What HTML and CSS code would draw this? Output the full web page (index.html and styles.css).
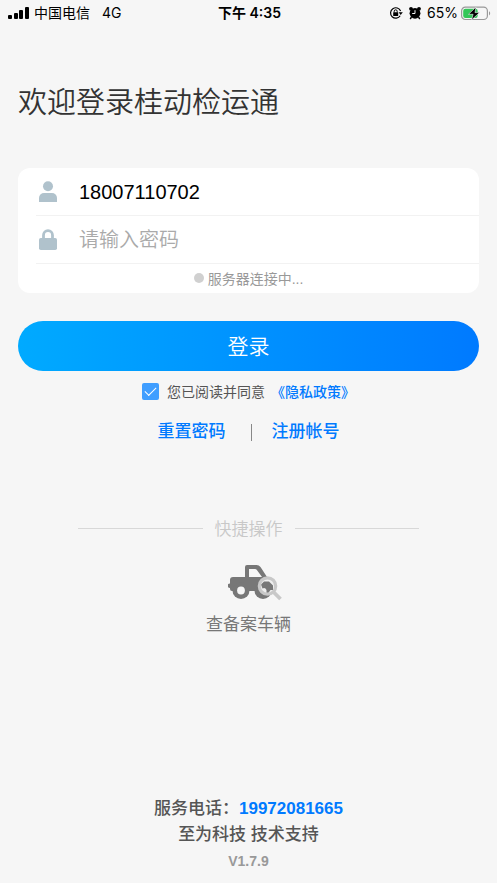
FILE: index.html
```html
<!DOCTYPE html>
<html lang="zh-CN">
<head>
<meta charset="utf-8">
<meta name="viewport" content="width=device-width, initial-scale=1">
<title>登录</title>
<link rel="stylesheet" href="styles.css">
</head>
<body>
<header class="status">
  <div class="status-left">
    <svg class="signal" width="22" height="14" viewBox="0 0 22 14" aria-hidden="true">
      <rect x="0" y="9" width="4" height="4" rx="1"/><rect x="6" y="7" width="4" height="6" rx="1"/><rect x="11" y="4" width="4" height="9" rx="1"/><rect x="17" y="1" width="4" height="12" rx="1"/>
    </svg>
    <span>中国电信</span>
    <span class="network">4G</span>
  </div>
  <div class="status-time">下午 4:35</div>
  <div class="status-right">
    <svg width="14" height="14" viewBox="0 0 14 14" aria-hidden="true">
      <path d="M11.6 5A5.2 5.2 0 1 0 11.2 9.700" fill="none" stroke="#000" stroke-width="1.200"/>
      <path d="M9.600 6.300h4.200l-2.100 2.700z"/>
      <rect x="4.200" y="6.300" width="5" height="3.700" rx=".5"/>
      <path d="M5.200 6.500V5.300a1.500 1.500 0 0 1 3 0v1.200" fill="none" stroke="#000"/>
    </svg>
    <svg width="14" height="14" viewBox="0 0 14 14" aria-hidden="true">
      <circle cx="7" cy="7.300" r="5.400"/>
      <circle cx="3" cy="2.800" r="1.900"/><circle cx="11" cy="2.800" r="1.900"/>
      <path d="M3.500 11l-1.300 2M10.500 11l1.300 2" stroke="#000" stroke-width="1.400"/>
      <path d="M7 4.200v3.300H4.200" fill="none" stroke="#f5f5f5" stroke-width="1"/>
    </svg>
    <span>65%</span>
    <svg class="battery" width="30" height="15" viewBox="0 0 30 15" aria-hidden="true">
      <rect x=".6" y="1.100" width="25.800" height="12.400" rx="3.800" fill="none" stroke="#999" stroke-width="1.200"/>
      <rect x="2.200" y="2.700" width="14.500" height="9.200" rx="2.200" fill="#34c759"/>
      <path d="M28 5.200c1.600.6 1.600 3.600 0 4.200z" fill="#999"/>
      <path d="M15 1L7.500 8.300h4.600L10.500 14l8-7.400H14z" fill="#000" stroke="#f5f5f5" stroke-width=".6"/>
    </svg>
  </div>
</header>

<main class="page">
  <h1 class="title">欢迎登录桂动检运通</h1>

  <form class="login">
    <div class="card">
      <div class="field">
        <label for="account" aria-label="账号">
          <svg width="18" height="21" viewBox="0 0 18 21" aria-hidden="true"><circle cx="9" cy="5.300" r="5"/><path d="M0 20.500V17a5 5 0 0 1 5-5h8a5 5 0 0 1 5 5v3.500a.5.5 0 0 1-.5.5H.5a.5.5 0 0 1-.5-.5z"/></svg>
        </label>
        <input id="account" type="tel" value="18007110702">
      </div>
      <div class="field">
        <label for="password" aria-label="密码">
          <svg width="18" height="21" viewBox="0 0 18 21" aria-hidden="true"><rect x="0" y="9" width="18" height="12" rx="1.800"/><path d="M4.500 10V6.200a4.500 4.500 0 0 1 9 0V10" fill="none" stroke="#b0c2cc" stroke-width="2.800"/></svg>
        </label>
        <input id="password" type="password" placeholder="请输入密码">
      </div>
      <div class="server"><span class="dot"></span>服务器连接中...</div>
    </div>
    <button class="submit" type="submit">登录</button>
    <div class="agree">
      <input id="agree" type="checkbox" checked>
      <label for="agree">您已阅读并同意</label>
      <a href="#privacy">《隐私政策》</a>
    </div>
  </form>

  <nav class="links">
    <a href="#reset">重置密码</a>
    <span class="bar"></span>
    <a href="#register">注册帐号</a>
  </nav>

  <section class="quick">
    <h2 class="quick-title">快捷操作</h2>
    <a class="quick-item" href="#vehicles">
      <svg width="54" height="36" viewBox="0 0 54 36" aria-hidden="true">
        <path fill="#777" fill-rule="evenodd" d="M19 0h9.500a5 5 0 0 1 4 2L39 12v14H4a2 2 0 0 1-2-2v-1a2.300 2.300 0 0 1 0-4.600V15a3 3 0 0 1 3-3h12V2a2 2 0 0 1 2-2zM21 4v8h13l-5.300-7.200a2 2 0 0 0-1.600-.8z"/>
        <circle cx="13" cy="25.500" r="8.500" fill="#777"/><circle cx="13" cy="25.500" r="3.900" fill="#f5f5f5"/>
        <circle cx="35" cy="25.500" r="8.500" fill="#777"/>
        <circle cx="39.500" cy="21" r="8" fill="#eee"/>
        <path d="M33 19.500l3-3h5l4 4v4.500h-2.500l-2.500 3.500h-1.500V25a3 3 0 0 0-4-1.500z" fill="#777"/>
        <circle cx="39.500" cy="21" r="8.200" fill="none" stroke="#c8c8c8" stroke-width="3.200"/>
        <path d="M45.500 27l7 7" stroke="#c8c8c8" stroke-width="3.800"/>
      </svg>
      <span>查备案车辆</span>
    </a>
  </section>
</main>

<footer class="footer">
  <div>服务电话：<a href="tel:19972081665">19972081665</a></div>
  <div>至为科技 技术支持</div>
  <div class="version">V1.7.9</div>
</footer>
</body>
</html>
```
FILE: styles.css
```css
* {
  box-sizing: border-box;
}

body {
  margin: 0;
  min-height: 100vh;
  display: flex;
  flex-direction: column;
  background: #f6f6f6;
  color: #555;
  font-family: "Liberation Sans", "Noto Sans CJK SC", sans-serif;
  font-size: 17px;
}

a {
  color: #007aff;
  text-decoration: none;
}

.status {
  display: grid;
  grid-template-columns: 1fr auto 1fr;
  align-items: center;
  height: 26px;
  padding: 0 6px 0 8px;
  color: #000;
  font-family: Inter, "Noto Sans CJK SC", sans-serif;
  font-size: 14px;
  line-height: 20px;
}

.status-left,
.status-right {
  display: flex;
  align-items: center;
}

.signal {
  margin-right: 4px;
}

.network {
  margin-left: 12px;
}

.status-time {
  font-weight: 600;
}

.status-right {
  justify-content: flex-end;
  gap: 5px;
}

.battery {
  margin-left: -2px;
}

.page {
  padding: 0 18px;
}

.title {
  margin: 55px 0 43px;
  color: #333;
  font-size: 29px;
  font-weight: 350;
  line-height: 44px;
}

.card {
  overflow: hidden;
  border-radius: 12px;
  background: #fff;
}

.field {
  display: flex;
  align-items: center;
  height: 48px;
  margin-left: 18px;
  padding-left: 3px;
  border-bottom: 1px solid #f2f2f2;
}

.field label {
  display: flex;
  width: 40px;
  fill: #b0c2cc;
}

.field input {
  flex: 1;
  min-width: 0;
  height: 40px;
  padding: 2px 0 0;
  border: 0;
  outline: 0;
  background: none;
  color: #000;
  font-family: inherit;
  font-size: 20px;
}

.field input::placeholder {
  color: #aaa;
  font-weight: 350;
}

.server {
  display: flex;
  align-items: center;
  justify-content: center;
  gap: 4px;
  height: 29px;
  padding-bottom: 2px;
  color: #999;
  font-size: 14px;
}

.dot {
  width: 10px;
  height: 10px;
  border-radius: 50%;
  background: #d0d0d0;
}

.submit {
  display: block;
  width: 100%;
  height: 50px;
  margin-top: 28px;
  padding: 0 0 2px;
  border: 0;
  border-radius: 25px;
  background: linear-gradient(90deg, #00aaff, #007aff);
  color: #fff;
  font-family: inherit;
  font-size: 21px;
  font-weight: 350;
}

.agree {
  display: flex;
  align-items: center;
  justify-content: center;
  height: 24px;
  margin-top: 8px;
  font-size: 14px;
}

.agree input {
  appearance: none;
  width: 17px;
  height: 17px;
  margin: 0 8px 0 0;
  border-radius: 2px;
  background: #409eff;
  display: grid;
  place-items: center;
}

.agree input:checked::after {
  content: "";
  width: 10px;
  height: 5px;
  margin-bottom: 3px;
  border: solid #fff;
  border-width: 0 0 1px 1px;
  transform: rotate(-45deg);
}

.agree a {
  margin-left: 6px;
  font-weight: 500;
}

.links {
  display: flex;
  align-items: center;
  justify-content: center;
  gap: 20px;
  margin-top: 16px;
  font-weight: 500;
  line-height: 26px;
}

.bar {
  width: 1px;
  height: 17px;
  margin-left: 5px;
  background: #888;
}

.quick {
  margin: 72px 60px 0;
}

.quick-title {
  display: flex;
  align-items: center;
  gap: 12px;
  margin: 0;
  color: #c8c8c8;
  font-size: 17px;
  font-weight: 350;
  line-height: 26px;
}

.quick-title::before,
.quick-title::after {
  content: "";
  flex: 1;
  height: 1px;
  margin-bottom: 3px;
  background: #d8d8d8;
}

.quick-item {
  display: flex;
  flex-direction: column;
  align-items: center;
  gap: 11px;
  margin-top: 22px;
  color: #777;
  line-height: 26px;
}

.quick-item svg {
  margin-left: 12px;
}

.footer {
  margin-top: auto;
  padding-bottom: 9px;
  font-weight: 500;
  line-height: 26px;
  text-align: center;
}

.footer a {
  font-weight: 700;
}

.version {
  color: #999;
  font-size: 14px;
  font-weight: 700;
}
```
